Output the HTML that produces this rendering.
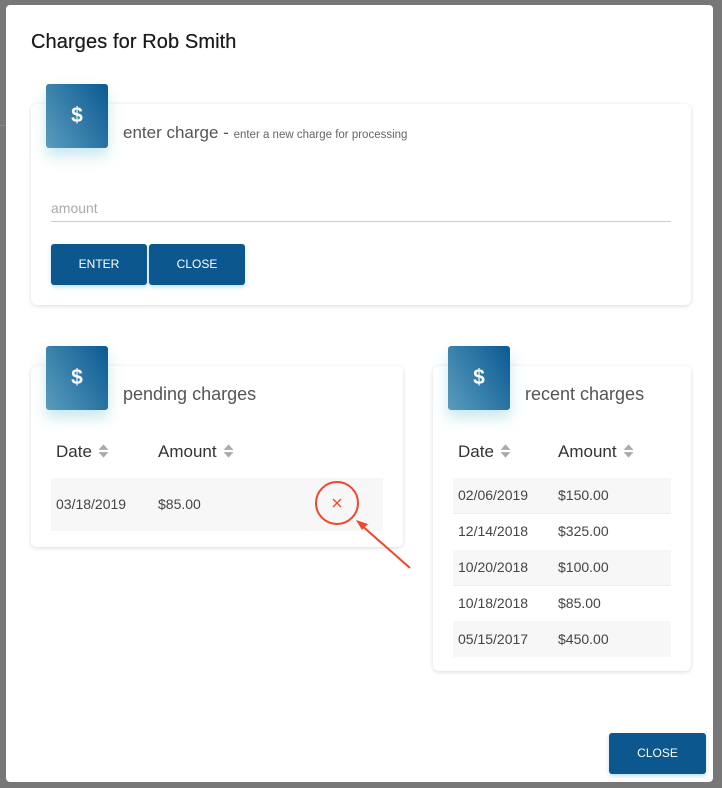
<!DOCTYPE html>
<html><head><style>
*{box-sizing:border-box;margin:0;padding:0}
body{width:722px;height:788px;background:#777;position:relative;overflow:hidden;font-family:"Liberation Sans",Arial,sans-serif;}
.modal{position:absolute;left:6px;top:5px;width:707px;height:777px;background:#fff;border-radius:4px;}
.abs{position:absolute}
.card{position:absolute;background:#fff;border-radius:6px;box-shadow:0 1px 4px rgba(0,0,0,0.15);}
.icon{position:absolute;width:62px;height:64px;border-radius:3px;background:linear-gradient(60deg,#5a9cbc,#0b5a93);box-shadow:0 8px 14px rgba(100,190,210,0.35);color:#fff;font-size:21px;font-weight:bold;text-align:center;line-height:64px;}
.btn{position:absolute;background:#0b578e;color:#fff;font-size:12px;text-align:center;border-radius:3px;box-shadow:0 2px 4px rgba(100,180,230,0.4);}
.t{position:absolute;white-space:nowrap;}
.row{position:absolute;height:36px;font-size:14px;color:#444;}
.sort{display:inline-block;width:11px;height:16px;vertical-align:-2px;margin-left:6px}
</style></head><body>
<div class="abs" style="left:0;top:125px;width:6px;height:1px;background:#888"></div>
<div class="modal"></div>
<div class="t" style="left:31px;top:31px;font-size:20px;color:#1a1a1a;letter-spacing:0.1px;text-shadow:0 0 0.4px #1a1a1a">Charges for Rob Smith</div>

<div class="card" style="left:31px;top:104px;width:660px;height:201px"></div>
<div class="icon" style="left:46px;top:84px">$</div>
<div class="t" style="left:123px;top:123px;font-size:17px;color:#555">enter charge - <span style="font-size:11.5px;color:#666">enter a new charge for processing</span></div>
<div class="t" style="left:51px;top:200px;font-size:14px;color:#aaa">amount</div>
<div class="abs" style="left:51px;top:221px;width:620px;height:1px;background:#ccc"></div>
<div class="btn" style="left:51px;top:244px;width:96px;height:41px;line-height:41px">ENTER</div>
<div class="btn" style="left:149px;top:244px;width:96px;height:41px;line-height:41px">CLOSE</div>

<div class="card" style="left:31px;top:366px;width:372px;height:181px"></div>
<div class="icon" style="left:46px;top:346px">$</div>
<div class="t" style="left:123px;top:384px;font-size:18px;color:#555">pending charges</div>
<div class="t" style="left:56px;top:442px;font-size:17px;color:#333">Date<svg class="sort" viewBox="0 0 10 14"><path d="M0.5 6L5 1L9.5 6Z M0.5 8L5 13L9.5 8Z" fill="#aaa"/></svg></div>
<div class="t" style="left:158px;top:442px;font-size:17px;color:#333">Amount<svg class="sort" viewBox="0 0 10 14"><path d="M0.5 6L5 1L9.5 6Z M0.5 8L5 13L9.5 8Z" fill="#aaa"/></svg></div>
<div class="row" style="left:51px;top:478px;width:332px;height:53px;background:#f7f7f7"></div>
<div class="t" style="left:56px;top:496px;font-size:14px;color:#444">03/18/2019</div>
<div class="t" style="left:158px;top:496px;font-size:14px;color:#444">$85.00</div>
<svg class="abs" style="left:0;top:0" width="722" height="788">
<circle cx="337" cy="503" r="21" fill="none" stroke="#f0462a" stroke-width="2"/>
<path d="M333 499L341 507M341 499L333 507" stroke="#f0462a" stroke-width="1.3"/>
<path d="M410 568L360 524" stroke="#f0462a" stroke-width="2"/>
<path d="M356 520L368 524L362 530Z" fill="#f0462a"/>
</svg>

<div class="card" style="left:433px;top:366px;width:258px;height:305px"></div>
<div class="icon" style="left:448px;top:346px">$</div>
<div class="t" style="left:525px;top:384px;font-size:18px;color:#555">recent charges</div>
<div class="t" style="left:458px;top:442px;font-size:17px;color:#333">Date<svg class="sort" viewBox="0 0 10 14"><path d="M0.5 6L5 1L9.5 6Z M0.5 8L5 13L9.5 8Z" fill="#aaa"/></svg></div>
<div class="t" style="left:558px;top:442px;font-size:17px;color:#333">Amount<svg class="sort" viewBox="0 0 10 14"><path d="M0.5 6L5 1L9.5 6Z M0.5 8L5 13L9.5 8Z" fill="#aaa"/></svg></div>
<div class="row" style="left:453px;top:478px;width:218px;background:#f7f7f7;border-bottom:1px solid #eee"></div>
<div class="row" style="left:453px;top:550px;width:218px;background:#f7f7f7;border-bottom:1px solid #eee"></div>
<div class="row" style="left:453px;top:621px;width:218px;background:#f7f7f7"></div>
<div class="t" style="left:458px;top:486px;font-size:14px;color:#444;line-height:36px;margin-top:-9px">02/06/2019<br>12/14/2018<br>10/20/2018<br>10/18/2018<br>05/15/2017</div>
<div class="t" style="left:558px;top:486px;font-size:14px;color:#444;line-height:36px;margin-top:-9px">$150.00<br>$325.00<br>$100.00<br>$85.00<br>$450.00</div>

<div class="btn" style="left:609px;top:733px;width:97px;height:41px;line-height:41px">CLOSE</div>
</body></html>
